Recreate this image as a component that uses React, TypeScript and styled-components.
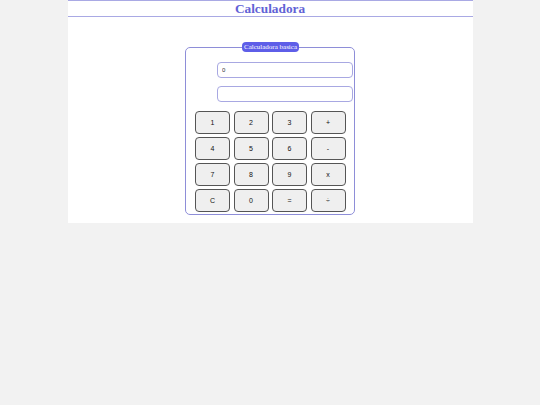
import styled, { createGlobalStyle } from "styled-components";

const GlobalStyle = createGlobalStyle`
  html, body {
    margin: 0;
    padding: 0;
    background: #f2f2f2;
  }
`;

const keys = ["1", "2", "3", "+", "4", "5", "6", "-", "7", "8", "9", "x", "C", "0", "=", "÷"];

export default function App() {
  return (
    <>
      <GlobalStyle />
      <Page>
        <Header>
          <Title>Calculadora</Title>
        </Header>
        <Calc>
          <Legend>Calculadora basica</Legend>
          <Display defaultValue="0" />
          <Display defaultValue="" />
          <Keys>
            {keys.map((k) => (
              <Key key={k}>{k}</Key>
            ))}
          </Keys>
        </Calc>
      </Page>
    </>
  );
}

const Page = styled.div`
  width: 75%;
  margin: 0 auto;
  background: #fff;
  height: 223px;
  box-sizing: border-box;
  overflow: hidden;
`;

const Header = styled.header`
  border-top: 1px solid #a9a9e4;
  border-bottom: 1px solid #a9a9e4;
  height: 15px;
  display: flex;
  align-items: center;
  justify-content: center;
`;

const Title = styled.h1`
  margin: 0;
  font-family: "Liberation Serif", serif;
  font-size: 13.3px;
  font-weight: bold;
  color: #6262d6;
  line-height: 15px;
`;

const Calc = styled.fieldset`
  width: 170px;
  box-sizing: border-box;
  margin: 25px auto 0;
  border: 1px solid #8e8ed8;
  border-radius: 5px;
  padding: 10px 8px 2px 9px;
  display: flex;
  flex-direction: column;
  align-items: stretch;
`;

const Legend = styled.legend`
  margin: 0 auto;
  padding: 0 2px;
  background: #5e5ee8;
  color: #fff;
  border-radius: 4px;
  font-family: "Liberation Serif", serif;
  font-size: 7px;
  font-weight: normal;
  line-height: 10px;
`;

const Display = styled.input`
  display: block;
  box-sizing: border-box;
  width: 136px;
  height: 16px;
  margin: 0 -7px 8px 22px;
  border: 1px solid #a8a8e2;
  border-radius: 4px;
  padding: 0 4px;
  font-family: "Liberation Sans", Arial, sans-serif;
  font-size: 6px;
  color: #333;
  outline: none;
`;

const Keys = styled.div`
  display: grid;
  grid-template-columns: repeat(4, 35px);
  grid-auto-rows: 23px;
  column-gap: 3.5px;
  row-gap: 3px;
  margin-top: 1px;
`;

const Key = styled.button`
  box-sizing: border-box;
  background: #efefef;
  border: 1px solid #555;
  border-radius: 4px;
  font-family: "Liberation Sans", Arial, sans-serif;
  font-size: 7px;
  color: #111;
  padding: 0;
`;
